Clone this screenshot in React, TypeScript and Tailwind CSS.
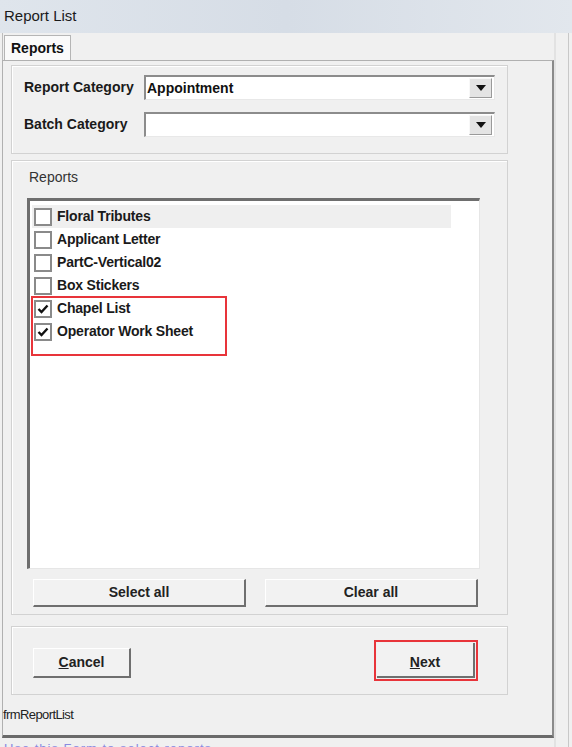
import React from "react";

const font = { fontFamily: '"Liberation Sans", Arial, sans-serif' };

function Check({ checked }: { checked?: boolean }) {
  return (
    <div className="w-[18px] h-[18px] border-2 border-[#8a8a8a] bg-white flex items-center justify-center shrink-0">
      {checked && (
        <svg width="12" height="10" viewBox="0 0 12 10">
          <path d="M1.5 5 L4.5 8 L10.5 1.5" stroke="#111" strokeWidth="2.4" fill="none" />
        </svg>
      )}
    </div>
  );
}

function Combo({ value }: { value: string }) {
  return (
    <div className="w-[351px] h-[25px] bg-white border-t-2 border-l-2 border-[#8c8c8c] border-r border-b border-r-[#e8e8e8] border-b-[#e8e8e8] flex items-center pl-[1px] pr-[2px]">
      <span className="flex-1 text-[14px] font-semibold text-[#111] leading-none">{value}</span>
      <div className="w-[23px] h-[20px] bg-[#e4e4e4] border border-[#f8f8f8] border-r-[#9a9a9a] border-b-[#9a9a9a] flex items-center justify-center">
        <svg width="10" height="6" viewBox="0 0 10 6">
          <path d="M0 0 H10 L5 6 Z" fill="#111" />
        </svg>
      </div>
    </div>
  );
}

function Btn({ children, className }: { children: React.ReactNode; className: string }) {
  return (
    <div
      className={
        "bg-[#f2f2f2] border border-white border-r-2 border-b-2 border-r-[#6f6f6f] border-b-[#6f6f6f] flex items-center justify-center text-[14px] font-bold text-[#222] " +
        className
      }
    >
      {children}
    </div>
  );
}

const items = [
  { t: "Floral Tributes", c: false, hl: true },
  { t: "Applicant Letter", c: false },
  { t: "PartC-Vertical02", c: false },
  { t: "Box Stickers", c: false },
  { t: "Chapel List", c: true },
  { t: "Operator Work Sheet", c: true },
];

export default function App() {
  return (
    <div style={font} className="w-[572px] h-[747px] bg-[#f0f0f0] overflow-hidden relative">
      {/* title bar */}
      <div className="h-[33px] bg-gradient-to-r from-[#dfe5ec] via-[#d6dde6] to-[#e2e7ed] flex items-center pl-[4px]">
        <span className="text-[15px] text-[#1a1a1a]">Report List</span>
      </div>
      <div className="flex">
        <div className="w-[554px] pl-[2px]">
          {/* tab strip */}
          <div className="h-[27px] flex items-end border-l border-[#bcbcbc]">
            <div className="h-[25px] w-[67px] ml-[1px] bg-[#fafafa] border border-b-0 border-[#b5b5b5] flex items-center pl-[6px] text-[14px] font-bold text-[#111]">
              Reports
            </div>
          </div>
          {/* tab panel */}
          <div className="h-[678px] border border-[#b0b0b0] border-r-2 border-r-[#8a8a8a] border-b-[3px] border-b-[#6a6a6a] bg-[#f0f0f0] flex flex-col pl-[8px] pt-[4px]">
            {/* group 1 */}
            <div className="w-[497px] h-[89px] border border-[#d2d2d2] shadow-[inset_1px_1px_0_#fff] pl-[12px] pt-[9px] flex flex-col gap-[12px]">
              <div className="flex items-center">
                <span className="w-[120px] text-[14px] font-semibold text-[#1a1a1a]">Report Category</span>
                <Combo value="Appointment" />
              </div>
              <div className="flex items-center">
                <span className="w-[120px] text-[14px] font-semibold text-[#1a1a1a]">Batch Category</span>
                <Combo value="" />
              </div>
            </div>
            {/* group 2 */}
            <div className="mt-[6px] w-[497px] h-[455px] border border-[#d2d2d2] shadow-[inset_1px_1px_0_#fff] pl-[15px] flex flex-col">
              <span className="mt-[6px] ml-[2px] text-[14px] text-[#333]">Reports</span>
              <div className="mt-[10px] w-[453px] h-[371px] bg-white border-t-[3px] border-l-[3px] border-[#6e6e6e] border-r border-b border-r-[#e6e6e6] border-b-[#e6e6e6] pt-[4px] pl-[2px] relative">
                {items.map((it) => (
                  <div
                    key={it.t}
                    className={
                      "h-[23px] w-[419px] flex items-center gap-[5px] pl-[2px] " + (it.hl ? "bg-[#efefef]" : "")
                    }
                  >
                    <Check checked={it.c} />
                    <span className="text-[14px] font-bold text-[#1a1a1a] tracking-[-0.2px]">{it.t}</span>
                  </div>
                ))}
                <div className="absolute left-[1px] top-[95px] w-[196px] h-[60px] border-2 border-[#e8343a]" />
              </div>
              <div className="mt-[10px] flex gap-[19px] pl-[6px]">
                <Btn className="w-[213px] h-[28px]">Select all</Btn>
                <Btn className="w-[213px] h-[28px]">Clear all</Btn>
              </div>
            </div>
            {/* group 3 */}
            <div className="mt-[11px] w-[497px] h-[69px] border border-[#d2d2d2] shadow-[inset_1px_1px_0_#fff] flex items-center pl-[21px] pr-[29px] justify-between">
              <Btn className="w-[98px] h-[30px] mt-[4px]">
                <span>
                  <span className="underline">C</span>ancel
                </span>
              </Btn>
              <div className="border-2 border-[#e8343a] p-[1px]">
                <Btn className="w-[98px] h-[35px] pt-[5px] border-t-0 border-l-0 border-r-0">
                  <span>
                    <span className="underline">N</span>ext
                  </span>
                </Btn>
              </div>
            </div>
            <div className="-ml-[8px] mt-[10px] text-[13px] tracking-[-0.6px] text-[#222]">frmReportList</div>
          </div>
          <div className="h-[10px] pl-[2px] pt-[3px] text-[13px] leading-[15px] text-[#8a8ae0] tracking-[1px]">
            Use this Form to select reports
          </div>
        </div>
        <div className="flex-1 flex">
          <div className="w-[2px] bg-[#e2e2e2]" />
          <div className="flex-1" />
          <div className="w-[1px] bg-[#c8c8c8]" />
          <div className="w-[3px]" />
        </div>
      </div>
    </div>
  );
}
